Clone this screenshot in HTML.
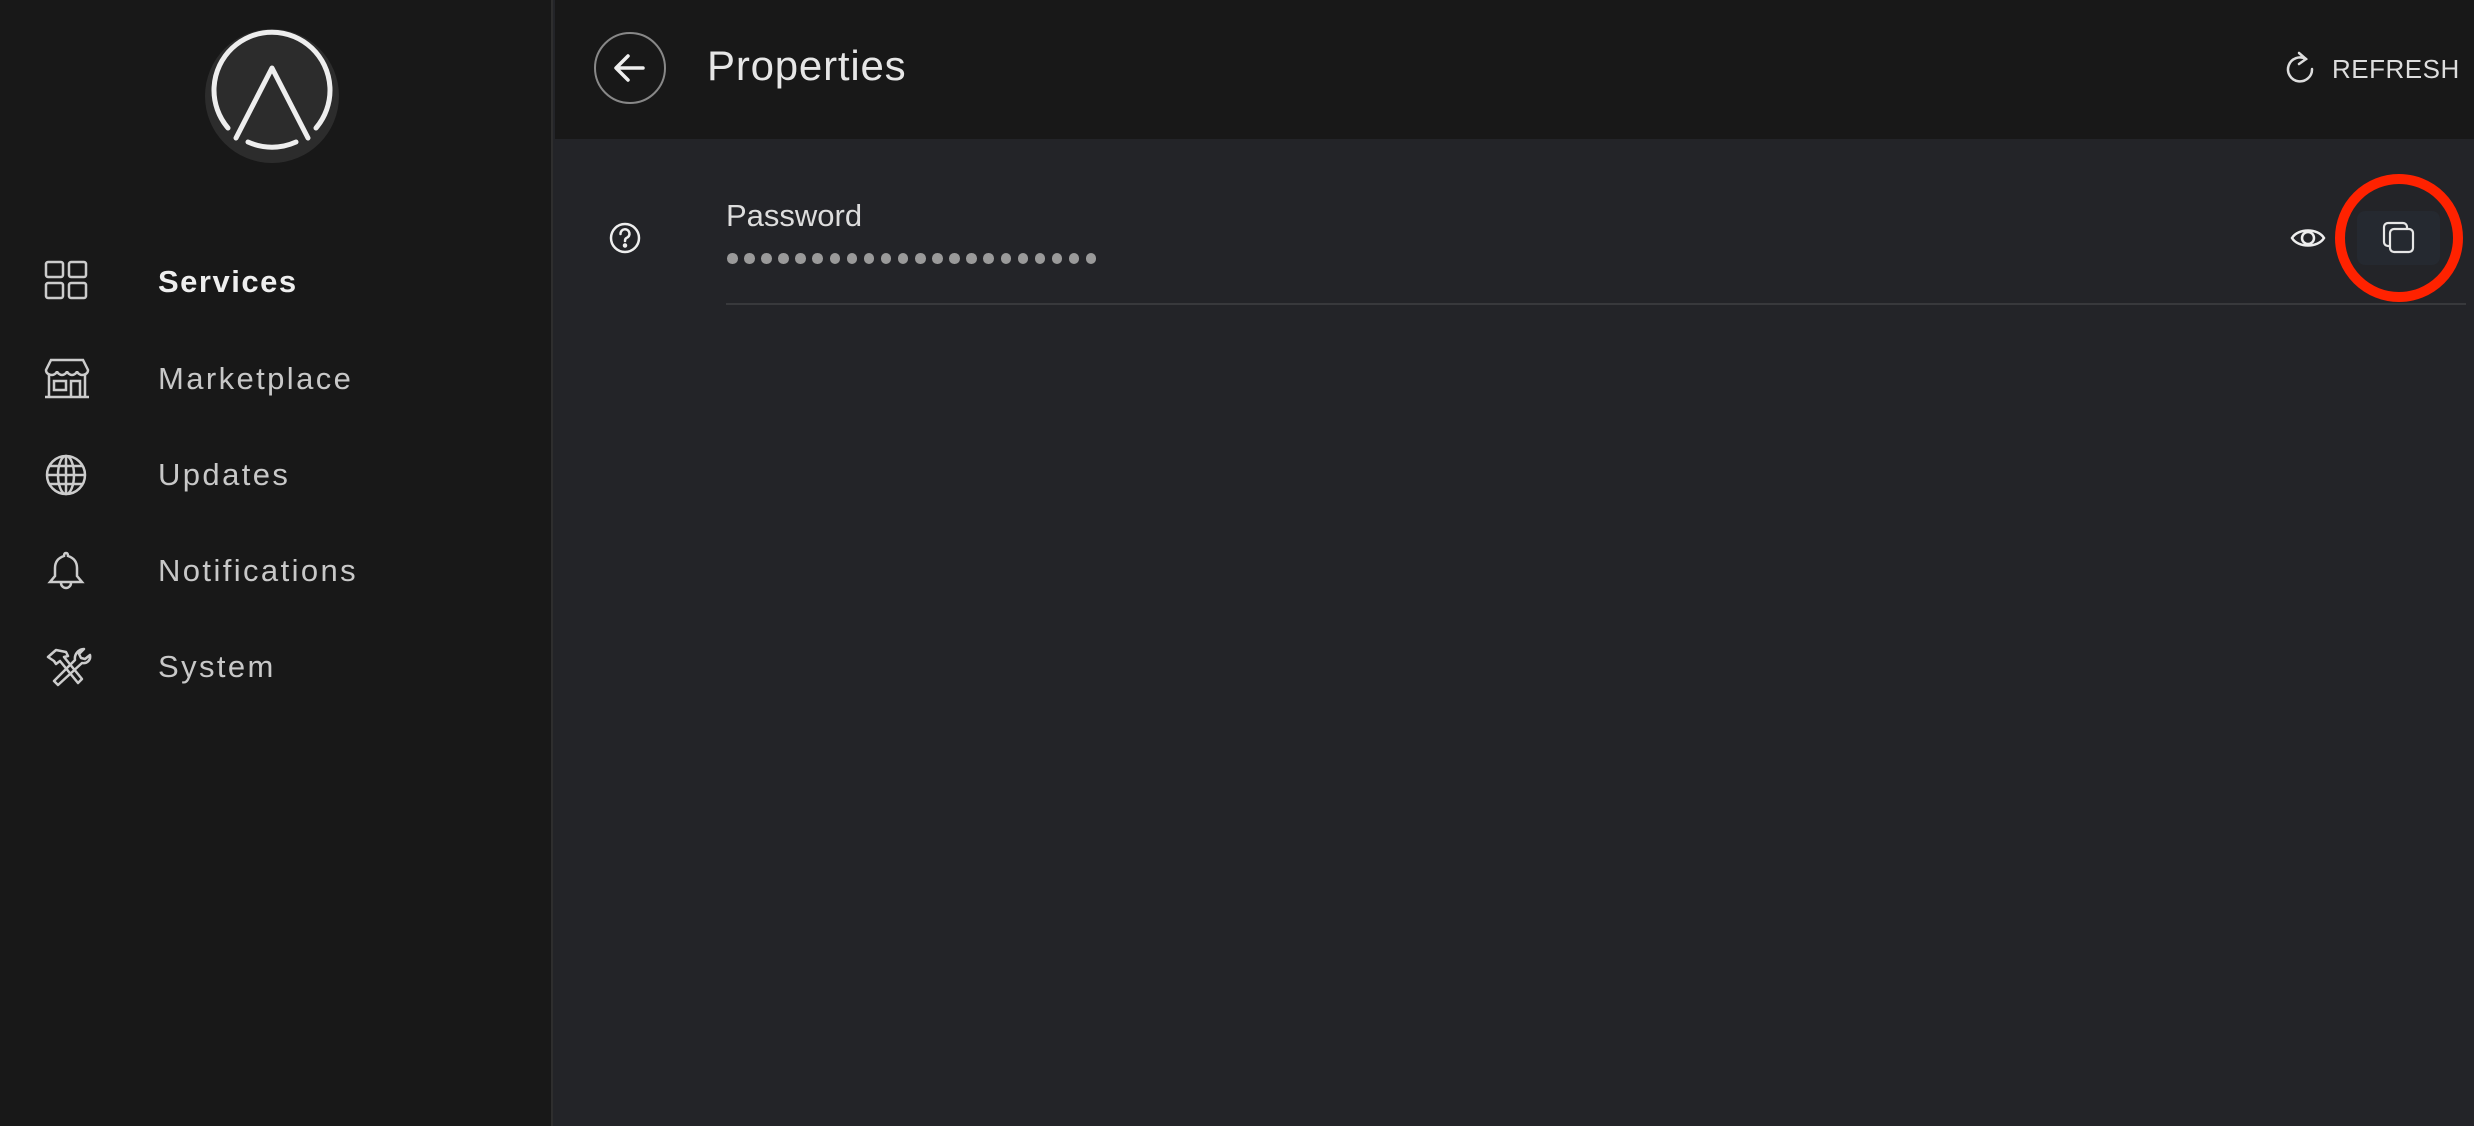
<!DOCTYPE html>
<html><head><meta charset="utf-8"><style>
*{margin:0;padding:0;box-sizing:border-box}
body{width:2474px;height:1126px;background:#232428;font-family:"Liberation Sans",sans-serif;overflow:hidden;position:relative;color:#e6e6e6}
.side{position:absolute;left:0;top:0;width:553px;height:1126px;background:#181818;border-right:2px solid #2e2e2e}
.nav{position:absolute;left:158px;font-size:31px;letter-spacing:2.4px;color:#c8c8c8;font-weight:300;transform:translateY(-50%)}
.ic{position:absolute;left:44px;transform:translateY(-50%)}
.hdr{position:absolute;left:555px;top:0;right:0;height:139px;background:#181818}
.abs{position:absolute}
</style></head><body>
<div class="side">
<svg class="abs" style="left:204px;top:28px" width="136" height="136" viewBox="0 0 136 136">
<circle cx="68" cy="68" r="67" fill="#2c2c2c"/>
<path d="M24 100 A58 58 0 1 1 112 100" fill="none" stroke="#eee" stroke-width="5" stroke-linecap="round"/>
<path d="M44 114 A58 58 0 0 0 92 114" fill="none" stroke="#eee" stroke-width="5" stroke-linecap="round"/>
<path d="M32 110 L68 40 L104 110" fill="none" stroke="#eee" stroke-width="5" stroke-linecap="round" stroke-linejoin="round"/>
</svg>
<svg class="ic" style="top:282px" width="44" height="44" viewBox="0 0 44 44" fill="none" stroke="#ccc" stroke-width="2.5"><rect x="2" y="2" width="17" height="15" rx="2"/><rect x="25" y="2" width="17" height="15" rx="2"/><rect x="2" y="23" width="17" height="15" rx="2"/><rect x="25" y="23" width="17" height="15" rx="2"/></svg>
<div class="nav" style="top:282px;color:#eee;font-weight:bold;letter-spacing:1.5px">Services</div>
<svg class="ic" style="top:379px" width="46" height="44" viewBox="0 0 46 44" fill="none" stroke="#ccc" stroke-width="2.5"><path d="M7 3h32l5 10c0 4-4 5-6 5s-5-2-5-4c0 2-3 4-5 4s-5-2-5-4c0 2-3 4-5 4s-5-2-5-4c0 2-3 4-5 4s-6-1-6-5z"/><path d="M5 18v22h36V18M1 40h44"/><rect x="10" y="24" width="12" height="9"/><path d="M27 40V24h9v16"/></svg>
<div class="nav" style="top:379px">Marketplace</div>
<svg class="ic" style="top:475px" width="44" height="44" viewBox="0 0 44 44" fill="none" stroke="#ccc" stroke-width="2.5"><circle cx="22" cy="22" r="19"/><ellipse cx="22" cy="22" rx="8" ry="19"/><path d="M22 3v38M3 22h38M6 13h32M6 31h32"/></svg>
<div class="nav" style="top:475px">Updates</div>
<svg class="ic" style="top:571px" width="44" height="44" viewBox="0 0 44 44" fill="none" stroke="#ccc" stroke-width="2.5"><path d="M22 4c-2 0-2 2-2 3-6 2-9 6-9 12v8l-5 6h32l-5-6v-8c0-6-3-10-9-12 0-1 0-3-2-3zM17 34a5 5 0 0 0 10 0"/></svg>
<div class="nav" style="top:571px">Notifications</div>
<svg class="ic" style="top:667px" width="48" height="44" viewBox="0 0 48 44" fill="none" stroke="#ccc" stroke-width="2.5" stroke-linejoin="round"><path d="M4 12l8-7 10 2 2 4-4 1 18 22-4 4-18-22-4 3-2-3z"/><path d="M40 4l-5 5 2 4 4 1 5-4c1 5-3 9-8 8L14 40l-4-4 21-21c-1-6 4-11 9-11z"/></svg>
<div class="nav" style="top:667px">System</div>
</div>
<div class="hdr"></div>
<svg class="abs" style="left:593px;top:31px" width="74" height="74" viewBox="0 0 74 74" fill="none"><circle cx="37" cy="37" r="35" stroke="#888" stroke-width="2"/><path d="M50 37H24M35 25L23 37l12 12" stroke="#eee" stroke-width="3.5" stroke-linecap="round" stroke-linejoin="round"/></svg>
<div class="abs" style="left:707px;top:42px;font-size:42px;letter-spacing:0.8px;color:#e6e6e6;font-weight:300">Properties</div>
<svg class="abs" style="left:2284px;top:51px" width="32" height="34" viewBox="0 0 32 34" fill="none" stroke="#ddd" stroke-width="2.5" stroke-linecap="round"><path d="M22 8A12 12 0 1 0 28 18"/><path d="M15 2l7 6-7 5"/></svg>
<div class="abs" style="left:2332px;top:54px;font-size:26px;letter-spacing:0.5px;color:#ddd">REFRESH</div>
<svg class="abs" style="left:608px;top:221px" width="34" height="34" viewBox="0 0 34 34" fill="none" stroke="#eee" stroke-width="2.5"><circle cx="17" cy="17" r="14"/><path d="M12.5 13a4.5 4.5 0 1 1 6 4c-1.3.6-1.5 1.5-1.5 3" stroke-linecap="round"/><circle cx="17" cy="24.5" r="1" fill="#eee"/></svg>
<div class="abs" style="left:726px;top:198px;font-size:31px;color:#ddd;font-weight:300">Password</div>
<div class="abs" style="left:727px;top:253px;display:flex;gap:6.6px">
<script>document.write('<i style="display:block;width:10.5px;height:10.5px;border-radius:50%;background:#9a9a9a"></i>'.repeat(22))</script>
</div>
<div class="abs" style="left:726px;top:303px;width:1740px;height:2px;background:#38393c"></div>
<svg class="abs" style="left:2290px;top:224px" width="36" height="28" viewBox="0 0 36 28" fill="none" stroke="#eee" stroke-width="2.5"><path d="M2 14C8 4 28 4 34 14 28 24 8 24 2 14z"/><circle cx="18" cy="14" r="6"/></svg>
<div class="abs" style="left:2357px;top:211px;width:83px;height:54px;border-radius:8px;background:#252930"></div>
<svg class="abs" style="left:2381px;top:220px" width="36" height="36" viewBox="0 0 36 36" fill="none" stroke="#e6e6e6" stroke-width="2.2"><rect x="9" y="9" width="23" height="23" rx="4"/><path d="M9 26H7a4 4 0 0 1-4-4V7a4 4 0 0 1 4-4h15a4 4 0 0 1 4 4v2"/></svg>
<div class="abs" style="left:2335px;top:174px;width:128px;height:128px;border-radius:50%;border:10px solid #ff2200"></div>
</body></html>
